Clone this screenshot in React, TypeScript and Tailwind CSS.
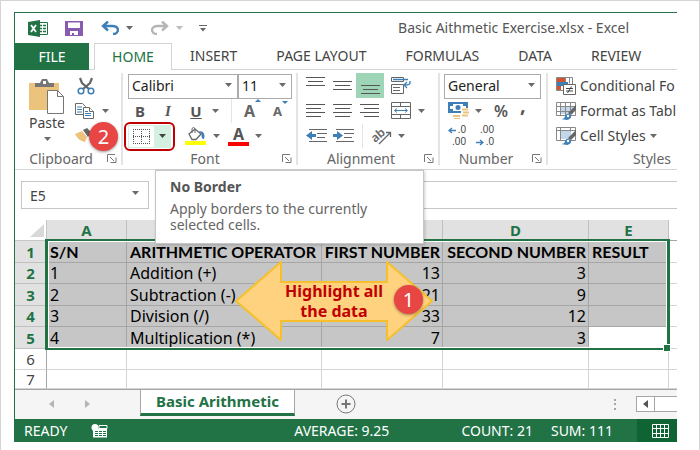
import type { ReactNode } from "react";

interface Row {
  sn: string;
  operator: string;
  first: string;
  second: string;
  result: string;
}

const ROWS: Row[] = [
  { sn: "S/N", operator: "ARITHMETIC OPERATOR", first: "FIRST NUMBER", second: "SECOND NUMBER", result: "RESULT" },
  { sn: "1", operator: "Addition (+)", first: "13", second: "3", result: "" },
  { sn: "2", operator: "Subtraction (-)", first: "21", second: "9", result: "" },
  { sn: "3", operator: "Division (/)", first: "33", second: "12", result: "" },
  { sn: "4", operator: "Multiplication (*)", first: "7", second: "3", result: "" },
];

const TABS = ["INSERT", "PAGE LAYOUT", "FORMULAS", "DATA", "REVIEW"];

function Caret({ color = "#6a6a6a" }: { color?: string }) {
  return (
    <svg width="7" height="4" viewBox="0 0 7 4" className="shrink-0">
      <path d="M0 0h7L3.5 4z" fill={color} />
    </svg>
  );
}

function Launcher() {
  return (
    <button aria-label="More options" className="shrink-0">
      <svg width="10" height="9" viewBox="0 0 10 9" fill="none" stroke="#777">
        <path d="M.5 8V.5H8M3 3l4 4M3.500 8.500h5.500V3.500" />
      </svg>
    </button>
  );
}

/* Stacked strokes used by every alignment button */
function Lines({ widths, align, height = 13 }: { widths: number[]; align: "l" | "c" | "r"; height?: number }) {
  return (
    <svg width="19" height={height} viewBox={`0 0 19 ${height}`}>
      {widths.map((w, i) => {
        const x = align === "l" ? 0 : align === "c" ? (19 - w) / 2 : 19 - w;
        return <rect key={i} x={x} y={i * 4} width={w} height="1" fill="#555" />;
      })}
    </svg>
  );
}

function Group({ label, width, children, launcher = true, end = false }: { label: string; width: string; children: ReactNode; launcher?: boolean; end?: boolean }) {
  return (
    <section className={`flex flex-col ${width}`}>
      <div className="h-[75px]">{children}</div>
      <div className={`flex h-6 items-center text-sm text-[#666] ${end ? "justify-end pr-1.5" : "pr-1"}`}>
        <span className={end ? "" : "flex-1 text-center"}>{label}</span>
        {launcher && <Launcher />}
      </div>
    </section>
  );
}

function Divider() {
  return <div className="mb-1 w-0.5 shrink-0 bg-[#e4e4e4]" />;
}

function Combo({ label, value, width }: { label: string; value: string; width: string }) {
  return (
    <div className={`relative ${width}`}>
      <select aria-label={label} className="h-[25px] w-full appearance-none border border-[#ababab] bg-white pl-[3px] text-sm text-[#222] outline-none">
        <option>{value}</option>
      </select>
      <span className="pointer-events-none absolute right-1.5 top-2.5">
        <Caret />
      </span>
    </div>
  );
}

function PasteIcon() {
  return (
    <svg width="36" height="36" viewBox="0 0 36 36">
      <path d="M0 4h30v27H0z" fill="#ecc37c" />
      <path d="M6 8V4h5l2-4h5l2 4h5v4z" fill="#767676" />
      <path d="M14 2h3v3h-3z" fill="#fff" />
      <path d="M18.500 11.500h10l6 6v17h-16z" fill="#fff" stroke="#767676" />
      <path d="M28.500 11.500v6h6" fill="none" stroke="#767676" />
    </svg>
  );
}

function CutIcon() {
  return (
    <svg width="18" height="18" viewBox="0 0 18 18" fill="none">
      <path d="M3 1l2 5 7 6M15 1l-2 5-7 6" stroke="#666" strokeWidth="2.200" />
      <circle cx="4" cy="14" r="2.800" stroke="#3f7fb8" strokeWidth="1.500" />
      <circle cx="14" cy="14" r="2.800" stroke="#3f7fb8" strokeWidth="1.500" />
    </svg>
  );
}

function CopyIcon() {
  return (
    <svg width="19" height="16" viewBox="0 0 19 16" fill="#fff" stroke="#6a6a6a">
      <path d="M.5.5h7l3 3v8H.5z" />
      <path d="M2 4h5M2 6.500h5M2 9h5" stroke="#3f7fb8" />
      <path d="M8.500 4.500h6l4 4v7h-10z" />
      <path d="M14.500 4.500v4h4" />
      <path d="M10 8.500h3M10 10.500h6M10 12.500h6" stroke="#3f7fb8" />
    </svg>
  );
}

function PainterIcon() {
  return (
    <svg width="20" height="15" viewBox="0 0 20 15">
      <path d="M0 6l7-3 5 6-2 5C5 13 2 10 0 6z" fill="#ecc37c" />
      <path d="M8 2l4-2 5 5-4 4z" fill="#666" />
    </svg>
  );
}

function BordersIcon() {
  return (
    <svg width="17" height="15" viewBox="0 0 17 15" fill="none" stroke="#555" strokeDasharray="1 1">
      <path d="M0 .5h17M0 7.500h17M0 14.500h17M.5 0v15M8.500 0v15M16.500 0v15" />
    </svg>
  );
}

function FillIcon() {
  return (
    <svg width="21" height="18" viewBox="0 0 21 18" fill="none">
      <path d="M4 7l6-5 6 5-5 5.500H7z" fill="#fff" stroke="#666" strokeWidth="1.300" />
      <path d="M7 6V1.500q1.500-2 3 0V6" stroke="#666" />
      <path d="M14 4q7 0 5 8-3 0-2.500-5z" fill="#3f7fb8" />
      <path d="M0 14h21v4H0z" fill="#ff0" />
    </svg>
  );
}

function GrowIcon({ shrink = false }: { shrink?: boolean }) {
  return (
    <span className="flex items-start font-bold leading-5 text-[#666]">
      <span className={shrink ? "text-[13px]" : "text-base"}>A</span>
      <svg width="6" height="4" viewBox="0 0 6 4">
        <path d={shrink ? "M0 0h6L3 3z" : "M0 3h6L3 0z"} fill="#3f7fb8" />
      </svg>
    </span>
  );
}

function WrapIcon() {
  return (
    <svg width="20" height="17" viewBox="0 0 20 17" fill="none" stroke="#666">
      <path d="M.5.5h12v4H.5zM.5 7.500h12v9H.5zM2 10.500h7M2 13.500h7" />
      <path d="M2 2.500h15M19 4v2q0 2-5 2M16 5l-3 3 3 3" stroke="#3f7fb8" strokeWidth="1.300" />
    </svg>
  );
}

function MergeIcon() {
  return (
    <svg width="20" height="17" viewBox="0 0 20 17" fill="none" stroke="#666">
      <path d="M.5.500h19v16H.5zM.5 4.500h19M.5 12.500h19M9.500.5v4M9.500 12.500v4" />
      <path d="M4 8.500h12M6 6.500l-2.500 2 2.500 2M14 6.500l2.500 2-2.500 2" stroke="#3f7fb8" />
    </svg>
  );
}

function IndentIcon({ right = false }: { right?: boolean }) {
  return (
    <svg width="21" height="13" viewBox="0 0 21 13">
      <path d="M3 .5h18M11 4.500h10M11 8.500h8M3 12.500h18" stroke="#666" />
      <path d={right ? "M0 5h4V2l6 4.500-6 4.500V8H0z" : "M10 5H6V2L0 6.500 6 11V8h4z"} fill="#3f7fb8" />
    </svg>
  );
}

function OrientationIcon() {
  return (
    <svg width="21" height="17" viewBox="0 0 21 17" overflow="visible">
      <text x="0" y="13" fontSize="12" fontWeight="600" fontFamily="Noto Sans" fill="#666" transform="rotate(-40 6 9)">ab</text>
      <path d="M8 17L19 6M15 5.500h4.500V10" fill="none" stroke="#666" strokeWidth="1.300" />
    </svg>
  );
}

function CurrencyIcon() {
  return (
    <svg width="21" height="18" viewBox="0 0 21 18" fill="none">
      <path d="M1 1h18v9H1z" fill="#fff" stroke="#3f7fb8" strokeWidth="2" />
      <path d="M2 2h3v2H2zM15 2h3v2h-3zM2 7h3v2H2z" fill="#3f7fb8" />
      <circle cx="10" cy="5.500" r="2.500" fill="#3f7fb8" />
      <path d="M13 6h8v11h-8z" fill="#fff" />
      <path d="M14 7.500h6M15 10.500h6M14 13.500h6M5 14h7" stroke="#ecc37c" strokeWidth="2" />
      <path d="M6 16.500h6" stroke="#ecc37c" />
    </svg>
  );
}

function DecimalIcon({ less = false }: { less?: boolean }) {
  const arrow = (
    <svg width="8" height="7" viewBox="0 0 8 7" fill="none" stroke="#3f7fb8" strokeWidth="1.400">
      <path d={less ? "M0 3.500h7M4 1l3 2.500L4 6" : "M8 3.500H1M4 1L1 3.500 4 6"} />
    </svg>
  );

  return (
    <span className="flex w-[18px] flex-col items-end font-['Liberation_Sans',sans-serif] text-[10px] leading-3 text-[#444]">
      <span className="flex items-center gap-0.5">{!less && arrow}{less ? ".00" : ".0"}</span>
      <span className="flex items-center gap-0.5">{less && arrow}{less ? ".0" : ".00"}</span>
    </span>
  );
}

function ConditionalIcon() {
  return (
    <svg width="20" height="18" viewBox="0 0 20 18" fill="none" className="shrink-0">
      <path d="M.5.500h16v13H.5zM9.500.5v6M13.500.5v6" stroke="#888" />
      <path d="M1 1h8v4H1zM1 9h4v4H1z" fill="#d6522f" />
      <path d="M1 5h11v4H1z" fill="#3f7fb8" />
      <path d="M7.500 7.500h12v10h-12z" fill="#fff" stroke="#666" />
      <path d="M10 11.500h7M10 14h7M15.500 9.500l-4 6.500" stroke="#444" />
    </svg>
  );
}

function TableStyleIcon({ cell = false }: { cell?: boolean }) {
  return (
    <svg width="20" height="18" viewBox="0 0 20 18" fill="none" className="shrink-0">
      <path d={cell ? "M5 4h10v8H5z" : "M5 5h12v7H5z"} fill="#c3d7ea" />
      <path d={cell ? "M.5.5h19v13H.5zM.5 3.500h19M4.500.5v13M14.500.5v4" : "M.5.5h19v13H.5zM.5 4.500h19M.5 9.500h15M4.500.5v13M9.500.5v13M14.500.5v8"} stroke="#888" />
      <path d="M20 3v5l-5 5-3-2z" fill="#666" />
      <path d="M5 17q4 0 4-3 2-4 6-1 1 4-4 5z" fill="#3f7fb8" />
      <circle cx="12" cy="14" r="1.200" fill="#fff" />
    </svg>
  );
}

function TitleBar() {
  return (
    <header className="flex h-[30px] items-center pl-[13px] pr-12">
      <svg width="20" height="17" viewBox="0 0 20 17" aria-label="Excel">
        <path d="M10 2.500h9.500v12H10z" fill="#fff" stroke="#217346" />
        <path d="M12 5.500h2M15 5.500h3M12 8.500h2M15 8.500h3M12 11.500h2M15 11.500h3" stroke="#217346" strokeWidth="1.500" />
        <path d="M0 2l12-2v17L0 15z" fill="#217346" />
        <path d="M3 5l5 7M8 5l-5 7" stroke="#fff" strokeWidth="1.800" />
      </svg>
      <button aria-label="Save" className="ml-[17px]">
        <svg width="18" height="15" viewBox="0 0 18 15">
          <path d="M0 0h18v15H0z" fill="#8a5aae" />
          <path d="M3 1.500h12V7H3zM5 10h8v4H9v-2H7v2H5z" fill="#fff" />
        </svg>
      </button>
      <button aria-label="Undo" className="ml-[18px] flex items-center gap-[7px]">
        <svg width="18" height="14" viewBox="0 0 18 14" fill="none" stroke="#3f7fb8" strokeWidth="2.400">
          <path d="M7 .5L2 5l5 4.500M2 5h9q6 0 6 4.500-1 3.500-5 3.500" />
        </svg>
        <Caret />
      </button>
      <button aria-label="Redo" className="ml-[18px] flex items-center gap-[7px]">
        <svg width="18" height="14" viewBox="0 0 18 14" fill="none" stroke="#b5b5b5" strokeWidth="2.400">
          <path d="M11 .5L16 5l-5 4.500M16 5H7Q1 5 1 9.500 2 13 6 13" />
        </svg>
        <Caret color="#bbb" />
      </button>
      <button aria-label="Customize toolbar" className="ml-4">
        <svg width="8" height="7" viewBox="0 0 8 7" fill="#666">
          <path d="M0 0h8v1H0zM1 3h6L4 6.500z" />
        </svg>
      </button>
      <h1 className="flex-1 text-right text-sm text-[#555]">Basic Aithmetic Exercise.xlsx - Excel</h1>
    </header>
  );
}

function RibbonTabs() {
  return (
    <nav className="flex h-[27px] text-sm text-[#444]">
      <button className="w-[74px] bg-[#217346] text-white">FILE</button>
      <div className="w-[5px] border-b border-[#d4d4d4]" />
      <button className="w-[78px] border-x border-t border-[#d4d4d4] text-[#217346]">HOME</button>
      <div className="flex flex-1 gap-[39px] border-b border-[#d4d4d4] pl-[18px]">
        {TABS.map((tab) => (
          <button key={tab} className="whitespace-nowrap">{tab}</button>
        ))}
      </div>
    </nav>
  );
}

function Ribbon() {
  return (
    <div className="flex h-[100px] overflow-hidden border-b border-[#d4d4d4] pt-[3px]">
      <Group label="Clipboard" width="w-[106px] shrink-0">
        <div className="flex pl-2">
          <button className="flex w-12 flex-col items-center pt-1.5 text-sm leading-4 text-[#444]">
            <PasteIcon />
            Paste
            <span className="mt-1.5 block"><Caret /></span>
          </button>
          <div className="flex flex-col pl-1">
            <button aria-label="Cut" className="flex h-[25px] items-center pl-0.5"><CutIcon /></button>
            <button aria-label="Copy" className="flex h-[25px] items-center gap-2"><CopyIcon /><Caret /></button>
            <button aria-label="Format Painter" className="flex h-[25px] items-center"><PainterIcon /></button>
          </div>
        </div>
      </Group>
      <Divider />
      <Group label="Font" width="w-[173px] shrink-0 pl-[5px]">
        <div className="flex">
          <Combo label="Font name" value="Calibri" width="w-[110px]" />
          <Combo label="Font size" value="11" width="w-[54px]" />
        </div>
        <div className="flex h-[25px] items-center text-[15px] text-[#555]">
          <button className="w-6 font-bold">B</button>
          <button className="ml-1 w-6 font-['Liberation_Serif',serif] font-bold italic">I</button>
          <button className="ml-1 w-6 font-bold underline">U</button>
          <button aria-label="Underline style" className="ml-1"><Caret /></button>
          <div className="ml-3 h-6 w-px bg-[#e4e4e4]" />
          <button aria-label="Increase font size" className="ml-3"><GrowIcon /></button>
          <button aria-label="Decrease font size" className="ml-3"><GrowIcon shrink /></button>
        </div>
        <div className="flex h-[25px] items-center">
          <button aria-label="No Border" className="relative flex h-[23px] items-center border border-[#d3f0e0] pl-1">
            <BordersIcon />
            <span className="ml-1 flex h-[21px] w-4 items-center justify-center bg-[#d3f0e0]"><Caret color="#444" /></span>
            <span className="absolute -inset-x-[5px] -inset-y-[4px] rounded-md border-2 border-[#c00000]" />
          </button>
          <button aria-label="Fill color" className="ml-3.5 flex items-center gap-[7px]"><FillIcon /><Caret /></button>
          <button aria-label="Font color" className="ml-2 flex items-center gap-1.5">
            <span className="flex h-[19px] w-[21px] items-center justify-center border-b-4 border-[#f00] text-base font-bold leading-4 text-[#555]">A</span>
            <Caret />
          </button>
        </div>
      </Group>
      <Divider />
      <Group label="Alignment" width="w-[140px] shrink-0">
        <div className="flex h-[25px] items-center pl-2">
          <button aria-label="Top align" className="-mt-2"><Lines widths={[19, 15, 19]} align="c" height={9} /></button>
          <button aria-label="Middle align" className="ml-2"><Lines widths={[19, 15, 19]} align="c" height={9} /></button>
          <button aria-label="Bottom align" className="ml-1 flex h-[25px] w-7 items-end justify-center bg-[#9fd5b7] pb-1"><Lines widths={[19, 15, 19]} align="c" height={9} /></button>
          <button aria-label="Wrap text" className="ml-[7px]"><WrapIcon /></button>
        </div>
        <div className="flex h-[25px] items-center pl-2">
          <button aria-label="Align left"><Lines widths={[19, 15, 19, 15]} align="l" /></button>
          <button aria-label="Center" className="ml-2"><Lines widths={[19, 15, 19, 15]} align="c" /></button>
          <button aria-label="Align right" className="ml-2"><Lines widths={[19, 15, 19, 15]} align="r" /></button>
          <button aria-label="Merge and center" className="ml-3 flex items-center gap-[7px]"><MergeIcon /><Caret /></button>
        </div>
        <div className="flex h-[25px] items-center pl-2">
          <button aria-label="Decrease indent"><IndentIcon /></button>
          <button aria-label="Increase indent" className="ml-1.5"><IndentIcon right /></button>
          <div className="ml-2 h-6 w-px bg-[#e4e4e4]" />
          <button aria-label="Orientation" className="ml-2 flex items-center gap-1.5"><OrientationIcon /><Caret /></button>
        </div>
      </Group>
      <Divider />
      <Group label="Number" width="w-[106px] shrink-0">
        <div className="pl-1">
          <Combo label="Number format" value="General" width="w-[97px]" />
        </div>
        <div className="flex h-[25px] items-center pl-2 text-[#555]">
          <button aria-label="Accounting format" className="flex items-center gap-1.5"><CurrencyIcon /><Caret /></button>
          <button className="ml-3 text-base font-semibold">%</button>
          <button className="ml-3 pb-3 text-xl font-bold leading-4">,</button>
        </div>
        <div className="flex h-[25px] items-center pl-2">
          <button aria-label="Increase decimal"><DecimalIcon /></button>
          <button aria-label="Decrease decimal" className="ml-2.5"><DecimalIcon less /></button>
        </div>
      </Group>
      <Divider />
      <Group label="Styles" width="min-w-0 flex-1" launcher={false} end>
        <div className="flex flex-col overflow-hidden whitespace-nowrap pl-2 text-sm text-[#444]">
          <button className="flex h-[25px] items-center gap-1"><ConditionalIcon />Conditional Fo</button>
          <button className="flex h-[25px] items-center gap-1"><TableStyleIcon />Format as Tabl</button>
          <button className="flex h-[25px] items-center gap-1"><TableStyleIcon cell />Cell Styles<Caret /></button>
        </div>
      </Group>
    </div>
  );
}

function FormulaBar() {
  return (
    <div className="flex items-center gap-1.5 py-[11px] pl-1.5">
      <div className="relative w-32">
        <input aria-label="Name box" defaultValue="E5" className="h-7 w-full border border-[#c6c6c6] pl-2 text-sm text-[#444] outline-none" />
        <span className="pointer-events-none absolute right-2.5 top-2.5"><Caret /></span>
      </div>
      <input aria-label="Formula" className="h-7 min-w-0 flex-1 border-y border-l border-[#c6c6c6] outline-none" />
    </div>
  );
}

function Sheet() {
  const picked = "border-b border-r border-[#a6a6a6] bg-[#c6c6c6]";
  const plain = "border-b border-r border-[#d4d4d4]";

  return (
    <div className="relative">
      <table className="w-full table-fixed border-separate border-spacing-0 overflow-hidden whitespace-nowrap text-base leading-5 text-black">
        <colgroup>
          <col className="w-8" />
          <col className="w-20" />
          <col className="w-[195px]" />
          <col className="w-[121px]" />
          <col className="w-[146px]" />
          <col className="w-20" />
          <col />
        </colgroup>
        <thead className="text-[15px] text-[#217346]">
          <tr className="h-[21px]">
            <th aria-label="Select all" className="border-b border-r border-[#c6c6c6] p-0">
              <svg width="14" height="13" viewBox="0 0 14 13" className="ml-auto mr-0.5">
                <path d="M14 0v13H0z" fill="#d8d8d8" />
              </svg>
            </th>
            {/* B and C sit under the tooltip */}
            {["A", "", "", "D", "E"].map((c, i) => (
              <th key={i} className="border-r border-[#c0c0c0] bg-[#e1e1e1] p-0 pb-0.5 leading-[18px]">{c}</th>
            ))}
            <th className="border-b border-[#a6a6a6] p-0" />
          </tr>
        </thead>
        <tbody>
          {ROWS.map((row, i) => (
            <tr key={row.sn} className={`${i % 2 ? "h-[21px]" : "h-[22px]"} ${i === 0 ? "font-[Lato,sans-serif] font-bold" : ""}`}>
              <th className="border-b border-r border-[#c0c0c0] bg-[#e1e1e1] p-0 font-['Noto_Sans',sans-serif] text-[15px] text-[#217346]">{i + 1}</th>
              <td className={`${picked} py-0 pl-[3px]`}>{row.sn}</td>
              <td className={`${picked} py-0 pl-[3px]`}>{row.operator}</td>
              <td className={`${picked} py-0 pr-0.5 text-right`}>{row.first}</td>
              <td className={`${picked} py-0 pr-0.5 text-right`}>{row.second}</td>
              <td className={`${i === 4 ? plain : picked} py-0 pl-[3px]`}>{row.result}</td>
              <td className="border-b border-[#d4d4d4] p-0" />
            </tr>
          ))}
          {["6", "7"].map((n) => (
            <tr key={n} className={n === "6" ? "h-[21px]" : "h-[19px]"}>
              <th className="border-b border-r border-b-[#d4d4d4] border-r-[#a6a6a6] p-0 text-[15px] font-normal leading-[18px] text-[#444]">{n}</th>
              {[0, 1, 2, 3, 4].map((c) => (
                <td key={c} className={`${plain} p-0`} />
              ))}
              <td className="border-b border-[#d4d4d4] p-0" />
            </tr>
          ))}
        </tbody>
      </table>

      {/* Selection frame with its fill handle */}
      <div className="pointer-events-none absolute left-[30px] top-[19px] h-[111px] w-[625px] border-x-[3px] border-y-2 border-[#217346] shadow-[inset_0_0_0_1px_#fff]">
        <div className="absolute -bottom-1 -right-1 size-2 border border-white bg-[#217346]" />
      </div>

      {/* Callout arrow */}
      <div className="absolute left-[220px] top-[41px] flex h-20 w-[198px] items-center justify-center">
        <svg width="198" height="80" viewBox="0 0 198 80" className="absolute inset-0">
          <path d="M1 40L46 1v20h106V1l45 39-45 39V60H46v19z" fill="#ffd27f" stroke="#f5c02c" strokeWidth="2" />
        </svg>
        <p className="relative text-center text-base font-bold leading-5 text-[#c00000]">
          Highlight all
          <br />
          the data
        </p>
      </div>
      <Badge n="1" place="left-[379px] top-[65px]" />
    </div>
  );
}

function Badge({ n, place }: { n: string; place: string }) {
  return (
    <span className={`absolute flex size-[29px] items-center justify-center rounded-full bg-[#e84545] text-xl text-white shadow-[0_1px_3px_#0006] ${place}`}>{n}</span>
  );
}

function SheetTabs() {
  return (
    <div className="flex h-[30px] items-start border-t border-[#a6a6a6] bg-[#f5f5f5]">
      <div className="flex h-7 w-[125px] items-center gap-[31px] pl-[34px]">
        <button aria-label="Previous sheet">
          <svg width="5" height="8" viewBox="0 0 5 8"><path d="M5 0v8L0 4z" fill="#b5b5b5" /></svg>
        </button>
        <button aria-label="Next sheet">
          <svg width="5" height="8" viewBox="0 0 5 8"><path d="M0 0v8l5-4z" fill="#b5b5b5" /></svg>
        </button>
      </div>
      <button className="h-[26px] w-[155px] border-x border-b-[3px] border-x-[#a6a6a6] border-b-[#217346] bg-white text-[15px] font-bold text-[#217346]">Basic Arithmetic</button>
      <button aria-label="New sheet" className="ml-[41px] mt-1">
        <svg width="20" height="20" viewBox="0 0 20 20" fill="none" stroke="#777">
          <circle cx="10" cy="10" r="9" />
          <path d="M5.500 10h9M10 5.500v9" strokeWidth="2" />
        </svg>
      </button>
      <div className="flex flex-1 items-center justify-end gap-[19px] pt-1.5">
        <svg width="3" height="11" viewBox="0 0 3 11" fill="#a6a6a6"><path d="M0 0h2v2H0zM0 4h2v2H0zM0 9h2v2H0z" /></svg>
        <div className="flex h-4 w-[41px] border-y border-l border-[#a6a6a6] bg-white">
          <button aria-label="Scroll left" className="flex w-[18px] items-center justify-center border-r border-[#a6a6a6]">
            <svg width="5" height="8" viewBox="0 0 5 8"><path d="M5 0v8L0 4z" fill="#555" /></svg>
          </button>
        </div>
      </div>
    </div>
  );
}

function StatusBar() {
  return (
    <footer className="flex h-[23px] items-center bg-[#217346] text-sm text-white">
      <span className="pl-[9px]">READY</span>
      <svg width="17" height="14" viewBox="0 0 17 14" className="ml-6" fill="none">
        <path d="M2 4.500h14v9H2z" fill="#fff" />
        <path d="M8 1.500h8v3H8z" stroke="#fff" />
        <path d="M4 7.500h3M8 7.500h3M12 7.500h3M4 9.500h3M8 9.500h3M12 9.500h3M4 11.500h3M8 11.500h3M12 11.500h3" stroke="#217346" />
        <circle cx="4" cy="3.500" r="3.500" fill="#fff" />
      </svg>
      <span className="flex-1 text-right">AVERAGE: 9.25</span>
      <span className="ml-[72px]">COUNT: 21</span>
      <span className="ml-[18px] mr-6">SUM: 111</span>
      <button aria-label="Normal view" className="flex h-full w-10 items-center justify-center bg-[#0e6433] pl-1.5">
        <svg width="17" height="14" viewBox="0 0 17 14" fill="none" stroke="#fff">
          <path d="M.5.5h16v13H.5zM.5 4.500h16M.5 9.500h16M4.500.5v13M8.500.5v13M12.500.5v13" />
        </svg>
      </button>
    </footer>
  );
}

export default function App() {
  return (
    <div className="min-h-screen border-x border-t border-[#d4d4d4] bg-white pb-2 pl-[13px] pr-[22px] pt-[11px] font-['Noto_Sans',sans-serif]">
      <main className="relative overflow-hidden border-l border-t border-[#217346]">
        <TitleBar />
        <RibbonTabs />
        <Ribbon />
        <FormulaBar />
        <Sheet />
        <SheetTabs />
        <StatusBar />

        <Badge n="2" place="left-[74px] top-[109px]" />
        <div role="tooltip" className="absolute left-[140px] top-[157px] h-[74px] w-[269px] border border-[#c6c6c6] bg-white px-3.5 pt-1.5 text-sm text-[#666] shadow-[1px_1px_3px_#0003]">
          <p className="font-bold leading-5 text-[#555]">No Border</p>
          <p className="mt-1 leading-4">
            Apply borders to the currently
            <br />
            selected cells.
          </p>
        </div>
      </main>
    </div>
  );
}
